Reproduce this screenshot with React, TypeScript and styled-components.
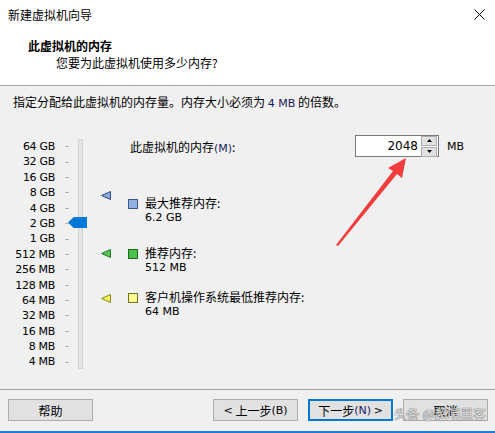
import React from "react";
import styled, { createGlobalStyle } from "styled-components";

const GlobalStyle = createGlobalStyle`
  html, body {
    margin: 0;
    padding: 0;
    background: #f0f0f0;
  }
  body {
    font-family: "Liberation Sans", "Noto Sans CJK SC", sans-serif;
    font-size: 12px;
    color: #000;
  }
`;

const CJK = `"Noto Sans CJK SC", "Liberation Sans", sans-serif`;
const LATIN = `"DejaVu Sans", "Noto Sans CJK SC", sans-serif`;

const Window = styled.div`
  position: relative;
  width: 495px;
  height: 433px;
  display: flex;
  flex-direction: column;
  background: #f0f0f0;
  overflow: hidden;
`;

const TitleBar = styled.div`
  height: 28px;
  background: #fff;
  display: flex;
  align-items: center;
  justify-content: space-between;
  padding: 0 8px 0 8px;
  font-family: ${CJK};
  font-size: 12px;
`;

const CloseBtn = styled.div`
  width: 20px;
  display: flex;
  justify-content: flex-end;
  padding-right: 2px;
`;

const Header = styled.div`
  height: 58px;
  background: #fff;
  border-bottom: 1px solid #a0a0a0;
  box-sizing: border-box;
  padding: 9px 0 0 28px;
  font-family: ${CJK};
`;

const HeaderTitle = styled.div`
  font-weight: bold;
  font-size: 12px;
  line-height: 17px;
`;

const HeaderSub = styled.div`
  font-size: 12px;
  line-height: 17px;
  padding-left: 28px;
`;

const Instruction = styled.div`
  padding: 8px 0 0 13px;
  height: 24px;
  box-sizing: border-box;
  font-family: ${CJK};
  font-size: 12px;
  line-height: 16px;
`;

const Latin = styled.span<{ $color?: string }>`
  font-family: ${LATIN};
  font-size: 11px;
  color: ${(p) => p.$color || "inherit"};
`;

const Main = styled.div`
  position: relative;
  flex: 1;
  display: flex;
  padding-top: 27px;
`;

const Scale = styled.div`
  position: relative;
  width: 120px;
  display: flex;
`;

const Labels = styled.div`
  width: 55px;
  display: flex;
  flex-direction: column;
  align-items: flex-end;
  padding-top: 2px;
`;

const Label = styled.div`
  height: 15.4px;
  line-height: 15.4px;
  font-family: ${LATIN};
  font-size: 11px;
  letter-spacing: -0.3px;
  color: #000;
  white-space: nowrap;
`;

const Ticks = styled.div`
  width: 20px;
  display: flex;
  flex-direction: column;
  align-items: center;
  padding-left: 2px;
  padding-top: 2px;
`;

const Tick = styled.div`
  height: 15.4px;
  display: flex;
  align-items: center;
  &::before {
    content: "";
    width: 4px;
    height: 1px;
    background: #b4b4b4;
  }
`;

const Track = styled.div`
  margin-top: 2px;
  width: 3px;
  height: 228px;
  background: #e4e4e4;
  border: 1px solid #d4d4d4;
  margin-left: 1px;
`;

const Thumb = styled.div`
  position: absolute;
  left: 68px;
  top: 80px;
  width: 19px;
  height: 11px;
  background: #0078d7;
  clip-path: polygon(0 50%, 30% 0, 100% 0, 100% 100%, 30% 100%);
`;

const Marker = styled.svg<{ $top: number }>`
  position: absolute;
  left: 101px;
  top: ${(p) => p.$top}px;
`;

const Content = styled.div`
  flex: 1;
  display: flex;
  flex-direction: column;
  padding-left: 10px;
`;

const MemoryRow = styled.div`
  display: flex;
  align-items: center;
  height: 24px;
  margin-top: -3px;
`;

const MemoryLabel = styled.div`
  width: 225px;
  font-family: ${CJK};
  font-size: 12px;
`;

const SpinBox = styled.div`
  display: flex;
  align-items: center;
  width: 84px;
  height: 22px;
  box-sizing: border-box;
  border: 1px solid #7a7a7a;
  background: #fff;
  padding-right: 1px;
`;

const SpinInput = styled.div`
  flex: 1;
  text-align: right;
  padding-right: 3px;
  font-family: ${LATIN};
  font-size: 12px;
`;

const SpinButtons = styled.div`
  display: flex;
  flex-direction: column;
  gap: 1px;
`;

const SpinBtn = styled.div`
  width: 14px;
  height: 8px;
  border: 1px solid #adadad;
  background: #e1e1e1;
  display: flex;
  align-items: center;
  justify-content: center;
`;

const Unit = styled.div`
  margin-left: 8px;
  font-family: ${LATIN};
  font-size: 11px;
`;

const Item = styled.div<{ $mt: number }>`
  display: flex;
  margin-top: ${(p) => p.$mt}px;
  margin-left: -2px;
`;

const Swatch = styled.div<{ $color: string; $border: string }>`
  width: 8px;
  height: 8px;
  margin-top: 4px;
  background: ${(p) => p.$color};
  border: 1px solid ${(p) => p.$border};
  margin-right: 7px;
`;

const ItemText = styled.div`
  display: flex;
  flex-direction: column;
  font-family: ${CJK};
  font-size: 12px;
  line-height: 15px;
`;

const Arrow = styled.svg`
  position: absolute;
  left: 0;
  top: 0;
  pointer-events: none;
`;

const Footer = styled.div`
  border-top: 1px solid #a0a0a0;
  box-sizing: border-box;
  display: flex;
  align-items: flex-start;
  padding: 9px 7px 0 8px;
  border-bottom: 2px solid #1a7fd6;
  height: 44px;
`;

const Button = styled.div<{ $focus?: boolean }>`
  width: 85px;
  height: 22px;
  box-sizing: border-box;
  background: #e1e1e1;
  border: ${(p) => (p.$focus ? "2px solid #0078d7" : "1px solid #adadad")};
  display: flex;
  align-items: center;
  justify-content: center;
  font-family: ${CJK};
  font-size: 12px;
`;

const Spacer = styled.div`
  flex: 1;
`;

const ButtonGroup = styled.div`
  display: flex;
  gap: 10px;
`;

const Watermark = styled.div`
  position: absolute;
  left: 394px;
  top: 404px;
  white-space: nowrap;
  font-family: ${CJK};
  font-size: 12.5px;
  color: rgba(255, 255, 255, 0.85);
  text-shadow: 0 0 1px #555, 0 0 1px #555;
  letter-spacing: 0.3px;
`;

const sizes = [
  "64 GB", "32 GB", "16 GB", "8 GB", "4 GB", "2 GB", "1 GB",
  "512 MB", "256 MB", "128 MB", "64 MB", "32 MB", "16 MB", "8 MB", "4 MB",
];

const markers = [
  { top: 54, fill: "#8aa8d8", stroke: "#2a4c84" },
  { top: 112, fill: "#5ac05a", stroke: "#1e7a1e" },
  { top: 157, fill: "#f0f060", stroke: "#8a8a10" },
];

// Main starts at page y 110; the arrow is drawn in page coordinates
const MAIN_TOP = 110;

const App: React.FC = () => {
  return (
    <Window>
      <GlobalStyle />
      <TitleBar>
        <span>新建虚拟机向导</span>
        <CloseBtn>
          <svg width="11" height="11" viewBox="0 0 11 11">
            <path d="M0.5 0.5 L10.5 10.5 M10.5 0.5 L0.5 10.5" stroke="#000" strokeWidth="1" />
          </svg>
        </CloseBtn>
      </TitleBar>
      <Header>
        <HeaderTitle>此虚拟机的内存</HeaderTitle>
        <HeaderSub>您要为此虚拟机使用多少内存?</HeaderSub>
      </Header>
      <Instruction>
        指定分配给此虚拟机的内存量。内存大小必须为 <Latin $color="#1a1a60">4 MB</Latin> 的倍数。
      </Instruction>
      <Main>
        <Scale>
          <Labels>
            {sizes.map((s) => (
              <Label key={s}>{s}</Label>
            ))}
          </Labels>
          <Ticks>
            {sizes.map((s) => (
              <Tick key={s} />
            ))}
          </Ticks>
          <Track />
          <Thumb />
          {markers.map((m) => (
            <Marker key={m.top} $top={m.top} width="10" height="9" viewBox="0 0 10 9">
              <polygon points="0.5,4.5 9.5,0.5 9.5,8.5" fill={m.fill} stroke={m.stroke} strokeWidth="1" />
            </Marker>
          ))}
        </Scale>
        <Content>
          <MemoryRow>
            <MemoryLabel>
              此虚拟机的内存<Latin $color="#1a1a60">(M)</Latin>:
            </MemoryLabel>
            <SpinBox>
              <SpinInput>2048</SpinInput>
              <SpinButtons>
                <SpinBtn>
                  <svg width="5" height="3" viewBox="0 0 5 3">
                    <polygon points="2.5,0 5,3 0,3" fill="#000" />
                  </svg>
                </SpinBtn>
                <SpinBtn>
                  <svg width="5" height="3" viewBox="0 0 5 3">
                    <polygon points="0,0 5,0 2.5,3" fill="#000" />
                  </svg>
                </SpinBtn>
              </SpinButtons>
            </SpinBox>
            <Unit>MB</Unit>
          </MemoryRow>
          <Item $mt={37}>
            <Swatch $color="#8fb0e0" $border="#3a5a8a" />
            <ItemText>
              <span>最大推荐内存:</span>
              <Latin>6.2 GB</Latin>
            </ItemText>
          </Item>
          <Item $mt={20}>
            <Swatch $color="#4cc04c" $border="#1a6a1a" />
            <ItemText>
              <span>推荐内存:</span>
              <Latin>512 MB</Latin>
            </ItemText>
          </Item>
          <Item $mt={14}>
            <Swatch $color="#ffff90" $border="#707020" />
            <ItemText>
              <span>客户机操作系统最低推荐内存:</span>
              <Latin>64 MB</Latin>
            </ItemText>
          </Item>
        </Content>
        <Arrow width="495" height="279" viewBox={`0 ${MAIN_TOP} 495 279`}>
          <polygon
            points="336,245 393,171 388,168 406,158 402,178 397,174 338,246"
            fill="#f23c3c"
          />
        </Arrow>
      </Main>
      <Footer>
        <Button>帮助</Button>
        <Spacer />
        <ButtonGroup>
          <Button>
            <Latin>&lt;</Latin>&nbsp;上一步<Latin>(B)</Latin>
          </Button>
          <Button $focus>
            下一步<Latin $color="#1a1a60">(N)</Latin>&nbsp;<Latin>&gt;</Latin>
          </Button>
          <Button>取消</Button>
        </ButtonGroup>
      </Footer>
      <Watermark>头条 @超哨黑客</Watermark>
    </Window>
  );
};

export default App;
